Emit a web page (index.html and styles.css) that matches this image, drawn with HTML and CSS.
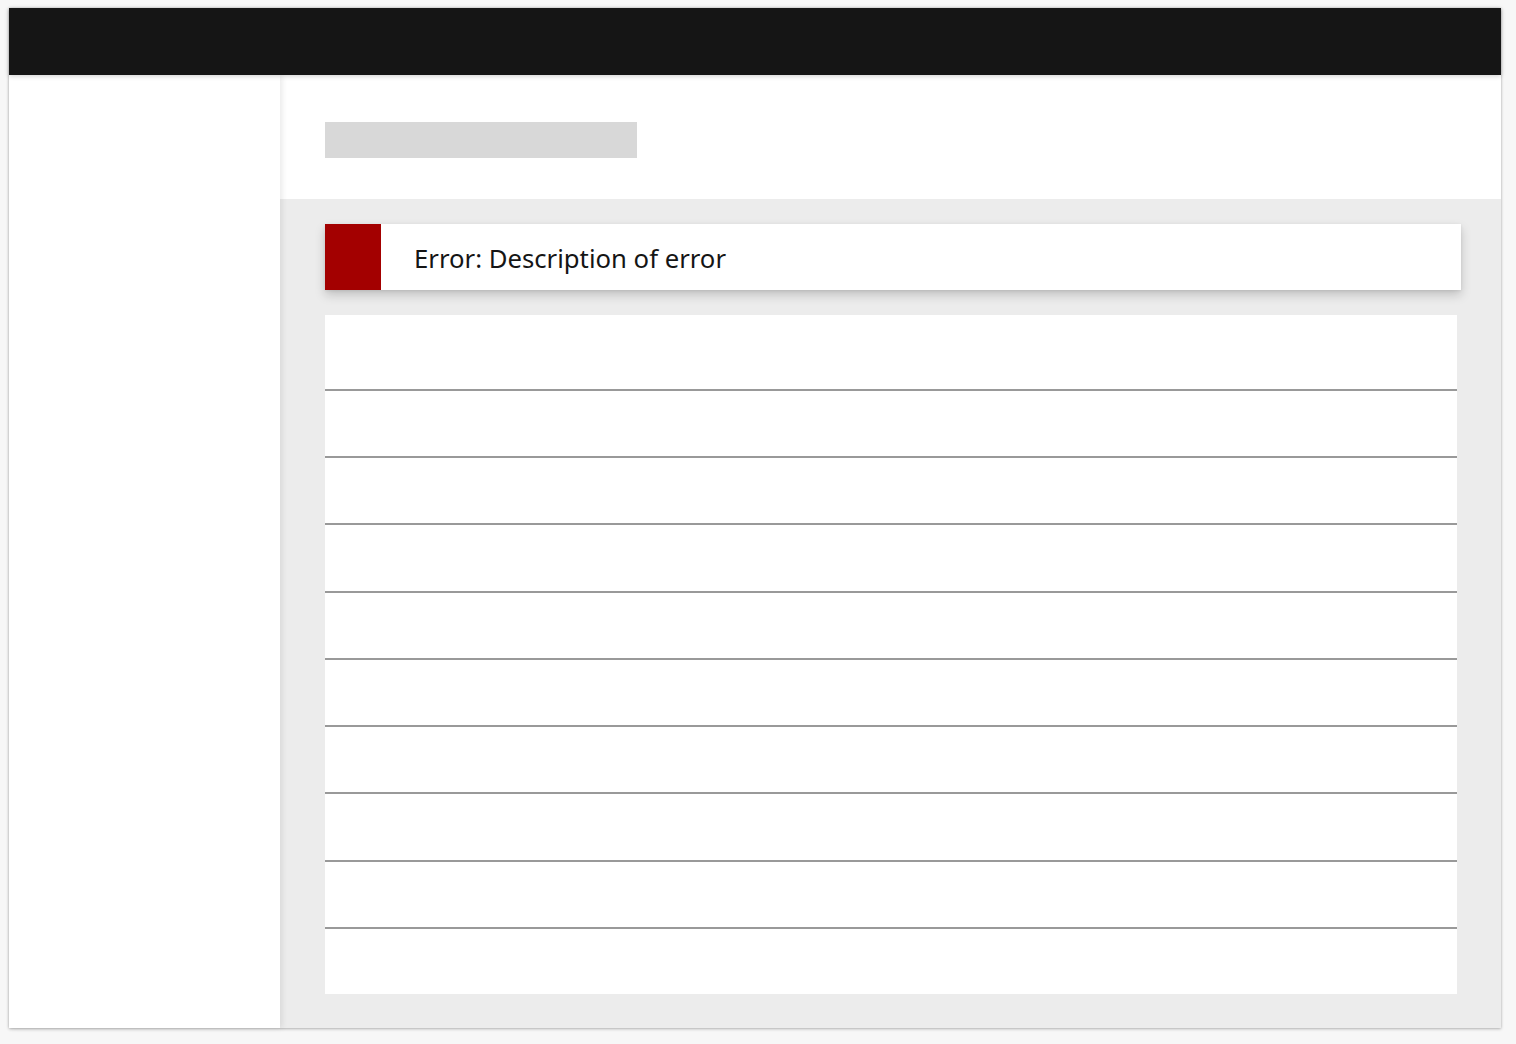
FILE: index.html
```html
<!DOCTYPE html>
<html lang="en">
<head>
<meta charset="utf-8">
<title>Error state</title>
<link rel="stylesheet" href="styles.css">
</head>
<body>
<div class="frame">
  <header class="topbar"></header>
  <div class="body">
    <aside class="sidebar"></aside>
    <main class="main">
      <section class="page-header">
        <div class="title-placeholder"></div>
      </section>
      <section class="content">
        <div class="alert">
          <div class="alert-icon"></div>
          <div class="alert-text">Error: Description of error</div>
        </div>
        <div class="table">
          <div class="row first"></div>
          <div class="row"></div>
          <div class="row"></div>
          <div class="row"></div>
          <div class="row"></div>
          <div class="row"></div>
          <div class="row"></div>
          <div class="row"></div>
          <div class="row"></div>
          <div class="row last"></div>
        </div>
      </section>
    </main>
  </div>
</div>
</body>
</html>
```
FILE: styles.css
```css
html, body {
  margin: 0;
  padding: 0;
}
body {
  background: #f7f7f7;
  font-family: "Noto Sans", "Open Sans", sans-serif;
  padding: 8px 15px 16px 9px;
}
.frame {
  width: 1492px;
  height: 1020px;
  display: flex;
  flex-direction: column;
  background: #ffffff;
  box-shadow: 0 1px 3px rgba(0,0,0,0.25), 0 0 2px rgba(0,0,0,0.12);
}
.topbar {
  height: 67px;
  flex: none;
  background: #151515;
  position: relative;
  z-index: 3;
  box-shadow: 0 1px 5px rgba(0,0,0,0.2);
}
.body {
  flex: 1;
  display: flex;
  min-height: 0;
}
.sidebar {
  width: 271px;
  flex: none;
  background: #ffffff;
  position: relative;
  z-index: 2;
  box-shadow: 2px 0 6px rgba(0,0,0,0.09);
}
.main {
  flex: 1;
  display: flex;
  flex-direction: column;
  background: #ececec;
}
.page-header {
  height: 124px;
  flex: none;
  background: #ffffff;
  padding: 47px 0 0 45px;
  box-sizing: border-box;
}
.title-placeholder {
  width: 312px;
  height: 36px;
  background: #d8d8d8;
}
.content {
  flex: 1;
  padding: 25px 40px 34px 45px;
  display: flex;
  flex-direction: column;
  gap: 25px;
}
.alert {
  height: 66px;
  flex: none;
  display: flex;
  align-items: center;
  background: #ffffff;
  box-shadow: 0 5px 10px rgba(0,0,0,0.18), 0 1px 3px rgba(0,0,0,0.08);
}
.alert-icon {
  width: 56px;
  height: 100%;
  background: #a30000;
  flex: none;
}
.alert-text {
  margin-left: 33px;
  font-size: 25.7px;
  color: #151515;
  padding-top: 2px;
}
.table {
  flex: 1;
  margin-right: 4px;
  background: #ffffff;
  display: flex;
  flex-direction: column;
}
.row {
  flex: 1;
  border-bottom: 2px solid #999999;
}
.row.first {
  flex: none;
  height: 74px;
}
.row.last {
  border-bottom: none;
}
```
